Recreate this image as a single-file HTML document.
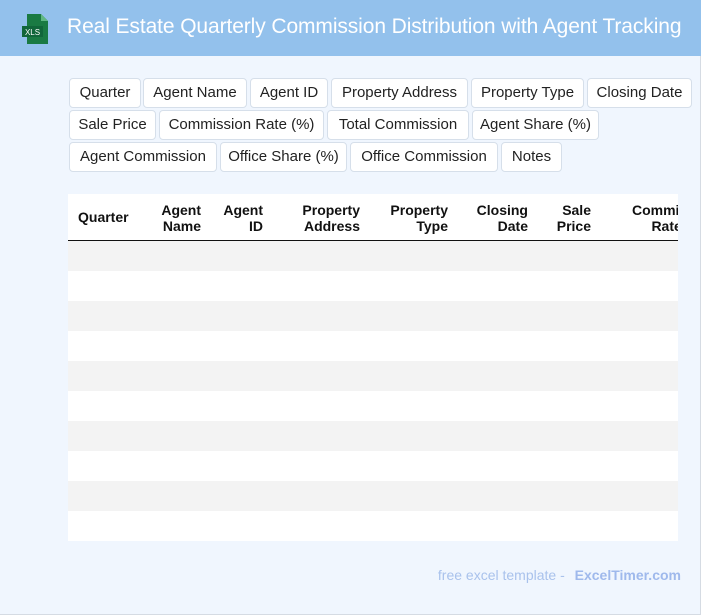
<!DOCTYPE html>
<html><head><meta charset="utf-8"><style>
*{margin:0;padding:0;box-sizing:border-box}
body{width:702px;height:616px;overflow:hidden;background:#fff;font-family:"Liberation Sans",Arial,sans-serif;position:relative}
.page{position:absolute;left:0;top:0;width:701px;height:615px;background:#f0f6fe;border-right:1px solid #d5dbe3;border-bottom:1px solid #d5dbe3}
.hdr{position:absolute;left:0;top:0;width:701px;height:56px;background:#93c1ec}
.hdr h1{position:absolute;left:67px;top:15px;font-size:21px;font-weight:normal;color:#fff;white-space:nowrap;letter-spacing:-0.1px}
.chip{position:absolute;height:30px;border:1px solid #d6dfea;border-radius:4px;background:#fff;font-size:15px;line-height:28px;text-align:center;color:#222;white-space:nowrap}
.tbl{position:absolute;left:68px;top:194px;width:610px;height:347px;background:#fff;overflow:hidden}
.th{position:absolute;top:8px;font-size:14px;font-weight:bold;line-height:16px;color:#111;text-align:right;white-space:nowrap}
.line{position:absolute;left:0;top:46px;width:610px;height:1px;background:#111}
.row{position:absolute;left:0;width:610px;height:30px}
.foot{position:absolute;right:19px;top:567px;font-size:14px;color:#a9c2ec}
.foot b{color:#9fb9ec;margin-left:6px}
</style></head><body>
<div class="page">
<div class="hdr">
<svg style="position:absolute;left:22px;top:14px" width="28" height="30" viewBox="0 0 28 30"><path d="M5 0h14l7 7v23H5z" fill="#1a7a43"/><path d="M19 0v7h7z" fill="#5fb883"/><rect x="0" y="12" width="21" height="11" fill="#11663a"/><text x="10.5" y="21" font-size="8" fill="#fff" text-anchor="middle" font-family="Liberation Sans">XLS</text></svg>
<h1>Real Estate Quarterly Commission Distribution with Agent Tracking</h1>
</div>
<div class="chip" style="left:69px;top:78px;width:72px">Quarter</div>
<div class="chip" style="left:143px;top:78px;width:104px">Agent Name</div>
<div class="chip" style="left:250px;top:78px;width:78px">Agent ID</div>
<div class="chip" style="left:331px;top:78px;width:137px">Property Address</div>
<div class="chip" style="left:471px;top:78px;width:113px">Property Type</div>
<div class="chip" style="left:587px;top:78px;width:105px">Closing Date</div>
<div class="chip" style="left:69px;top:110px;width:87px">Sale Price</div>
<div class="chip" style="left:159px;top:110px;width:165px">Commission Rate (%)</div>
<div class="chip" style="left:327px;top:110px;width:142px">Total Commission</div>
<div class="chip" style="left:472px;top:110px;width:127px">Agent Share (%)</div>
<div class="chip" style="left:69px;top:142px;width:148px">Agent Commission</div>
<div class="chip" style="left:220px;top:142px;width:127px">Office Share (%)</div>
<div class="chip" style="left:350px;top:142px;width:148px">Office Commission</div>
<div class="chip" style="left:501px;top:142px;width:61px">Notes</div>
<div class="tbl">
<div class="th" style="left:10px;top:15px;text-align:left">Quarter</div>
<div class="th" style="right:477px">Agent<br>Name</div>
<div class="th" style="right:415px">Agent<br>ID</div>
<div class="th" style="right:318px">Property<br>Address</div>
<div class="th" style="right:230px">Property<br>Type</div>
<div class="th" style="right:150px">Closing<br>Date</div>
<div class="th" style="right:87px">Sale<br>Price</div>
<div class="th" style="left:564px;text-align:left">Commission<br>&nbsp;&nbsp;&nbsp;&nbsp;&nbsp;Rate</div>
<div class="line"></div>
<div class="row" style="top:47px;background:#f3f3f3"></div>
<div class="row" style="top:107px;background:#f3f3f3"></div>
<div class="row" style="top:167px;background:#f3f3f3"></div>
<div class="row" style="top:227px;background:#f3f3f3"></div>
<div class="row" style="top:287px;background:#f3f3f3"></div>
</div>
<div class="foot">free excel template - <b>ExcelTimer.com</b></div>
</div>
</body></html>
